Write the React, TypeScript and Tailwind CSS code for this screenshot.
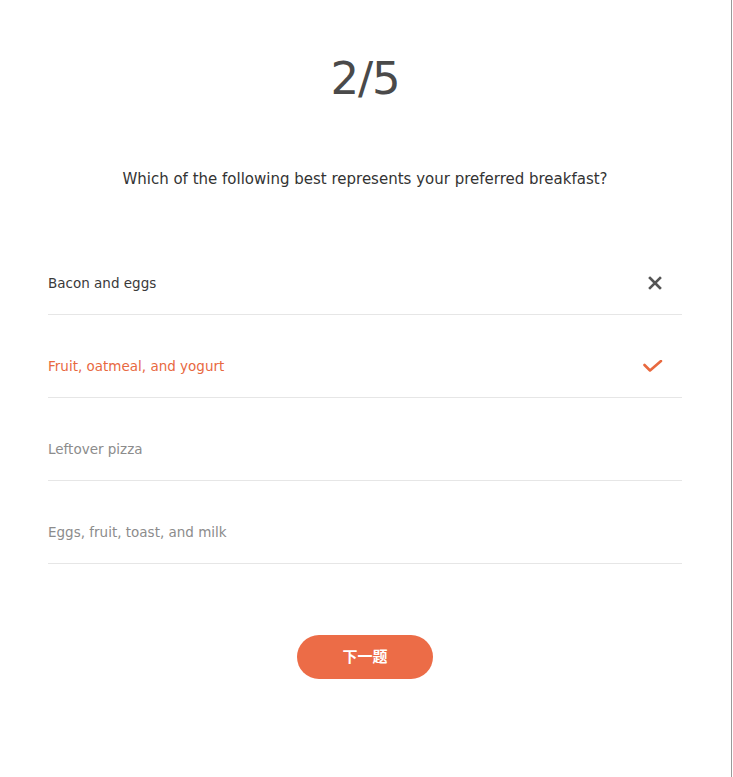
import { useState } from 'react';

type Option = {
  label: string;
  state: 'wrong' | 'right' | 'idle';
};

const options: Option[] = [
  { label: 'Bacon and eggs', state: 'wrong' },
  { label: 'Fruit, oatmeal, and yogurt', state: 'right' },
  { label: 'Leftover pizza', state: 'idle' },
  { label: 'Eggs, fruit, toast, and milk', state: 'idle' },
];

function CrossIcon() {
  return (
    <svg width="14" height="14" viewBox="0 0 14 14" fill="none">
      <path d="M2 2L12 12M12 2L2 12" stroke="#555555" strokeWidth="2.6" strokeLinecap="square" />
    </svg>
  );
}

function CheckIcon() {
  return (
    <svg width="24" height="12" viewBox="0 0 24 12" fill="none">
      <path d="M1.5 5L7 10.5L18 1" stroke="#e8693f" strokeWidth="2.6" strokeLinecap="round" strokeLinejoin="round" />
    </svg>
  );
}

export default function App() {
  const [step] = useState(2);

  return (
    <div className="min-h-screen bg-white">
      <div
        className="w-[732px] min-h-[777px] border-r border-[#9a9a9a] bg-white"
        style={{ fontFamily: '"DejaVu Sans", "Noto Sans CJK SC", sans-serif' }}
      >
        <div className="w-[730px] px-[48px] pt-[56px]">
          {/* Progress */}
          <h1 className="text-center text-[45px] leading-[45px] font-normal text-[#4a4a4a] tracking-tight">
            {step}/5
          </h1>

          {/* Question */}
          <p className="mt-[68px] text-center text-[15px] leading-[20px] text-[#333333]">
            Which of the following best represents your preferred breakfast?
          </p>

          {/* Options */}
          <ul className="mt-[43px]">
            {options.map((opt) => (
              <li
                key={opt.label}
                className="flex items-center justify-between border-b border-[#e6e6e6] pt-[43px] pb-[23px] h-[83px]"
              >
                <span
                  className={
                    opt.state === 'wrong'
                      ? 'text-[13.5px] leading-[16px] text-[#3a3a3a]'
                      : opt.state === 'right'
                        ? 'text-[13.5px] leading-[16px] text-[#e8693f]'
                        : 'text-[13.5px] leading-[16px] text-[#8c8c8c]'
                  }
                >
                  {opt.label}
                </span>
                <span className="flex w-[24px] h-[16px] items-center justify-center mr-[15px]">
                  {opt.state === 'wrong' && <CrossIcon />}
                  {opt.state === 'right' && <CheckIcon />}
                </span>
              </li>
            ))}
          </ul>

          {/* Next */}
          <div className="mt-[71px] flex justify-center">
            <button className="h-[44px] w-[136px] rounded-full bg-[#ec6c47] text-[15px] font-bold text-white">
              下一题
            </button>
          </div>
        </div>
      </div>
    </div>
  );
}
